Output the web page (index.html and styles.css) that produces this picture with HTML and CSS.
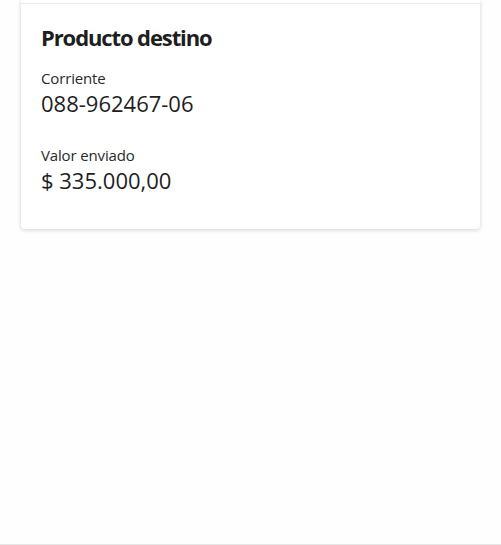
FILE: index.html
```html
<!DOCTYPE html>
<html lang="es">
<head>
<meta charset="utf-8">
<link rel="stylesheet" href="styles.css">
</head>
<body>
<div class="page">
  <main class="content">
    <section class="card">
      <div class="divider"></div>
      <div class="card-body">
        <h2 class="title">Producto destino</h2>
        <div class="field">
          <div class="label">Corriente</div>
          <div class="value">088-962467-06</div>
        </div>
        <div class="field">
          <div class="label">Valor enviado</div>
          <div class="value">$ 335.000,00</div>
        </div>
      </div>
    </section>
  </main>
  <footer class="bottom-bar"></footer>
</div>
</body>
</html>
```
FILE: styles.css
```css
html, body {
  margin: 0;
  padding: 0;
  background: #fefefe;
}
body {
  font-family: "Open Sans", "Noto Sans", sans-serif;
  color: #1f1f1f;
}
.page {
  height: 545px;
  display: flex;
  flex-direction: column;
}
.content {
  flex: 1;
  padding: 0 21px;
}
.card {
  background: #fff;
  border-radius: 0 0 4px 4px;
  box-shadow: 0 1px 4px rgba(0, 0, 0, 0.18);
  padding-top: 3px;
}
.divider {
  height: 1px;
  background: #ececec;
}
.card-body {
  padding: 19px 20px 34px 20px;
  display: flex;
  flex-direction: column;
}
.title {
  margin: 0;
  font-size: 22px;
  font-weight: 700;
  letter-spacing: -1.1px;
  line-height: 28px;
  color: #1e1e1e;
}
.field {
  display: flex;
  flex-direction: column;
  margin-top: 17px;
}
.field + .field {
  margin-top: 27px;
}
.label {
  font-size: 15px;
  line-height: 20px;
  letter-spacing: -0.15px;
  color: #2a2a2a;
}
.value {
  font-size: 22px;
  line-height: 30px;
  color: #1e1e1e;
}
.bottom-bar {
  height: 1px;
  background: #e6e6e6;
}
```
